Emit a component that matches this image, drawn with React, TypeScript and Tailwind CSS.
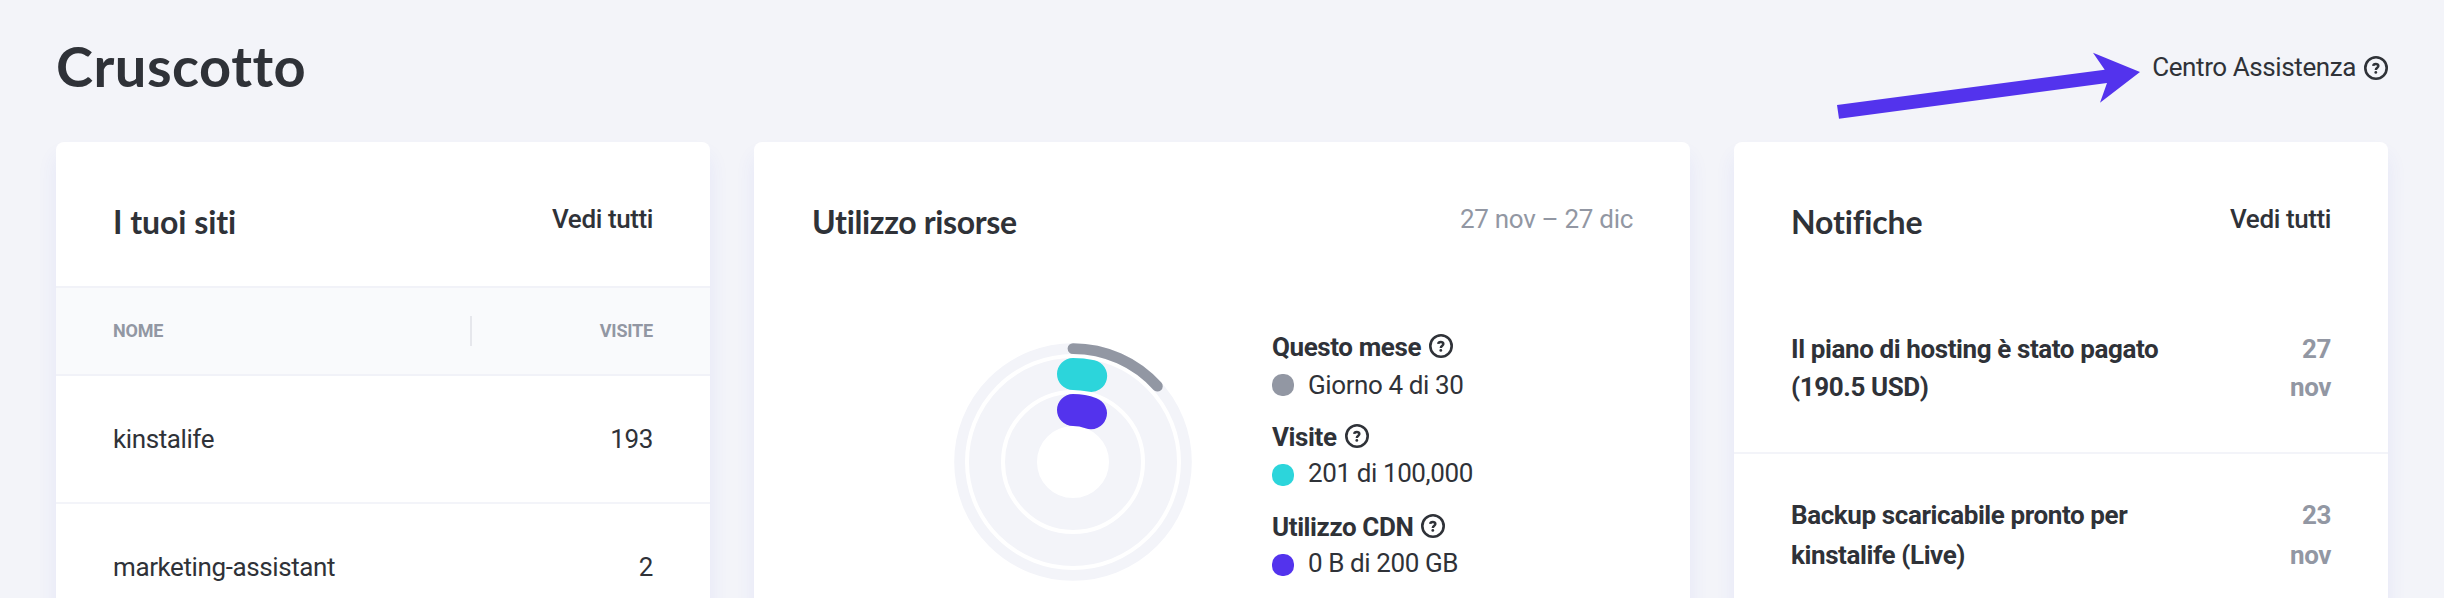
import type { ReactNode } from "react";

interface Sito {
  nome: string;
  visite: number;
}

const SITI: Sito[] = [
  { nome: "kinstalife", visite: 193 },
  { nome: "marketing-assistant", visite: 2 },
];

const RISORSE = [
  { label: "Questo mese", value: "Giorno 4 di 30", dot: "bg-[#9297a3]", leading: "leading-[38px]" },
  { label: "Visite", value: "201 di 100,000", dot: "bg-[#2cd5db]", leading: "leading-[34px]" },
  { label: "Utilizzo CDN", value: "0 B di 200 GB", dot: "bg-[#5333ed]", leading: "leading-[34px]" },
];

const NOTIFICHE = [
  { righe: ["Il piano di hosting è stato pagato", "(190.5 USD)"], giorno: "27", mese: "nov", spacing: "pt-11 leading-[38px]" },
  { righe: ["Backup scaricabile pronto per", "kinstalife (Live)"], giorno: "23", mese: "nov", spacing: "pt-[41px] leading-[40px]" },
];

// raggio, spessore, lunghezza dell'arco, colore
const ANELLI = [
  { r: 113.4, w: 10.8, arc: 95, color: "#9297a3" },
  { r: 88, w: 32, arc: 18.3, color: "#2cd5db" },
  { r: 52, w: 32, arc: 18.3, color: "#5333ed" },
];

interface CardProps {
  title: string;
  titleClass: string;
  action: ReactNode;
  className: string;
  children: ReactNode;
}

function HelpIcon({ className }: { className: string }) {
  return (
    <svg width="24" height="24" viewBox="0 0 24 24" fill="none" stroke="#2f3238" className={`flex-shrink-0 ${className}`}>
      <circle cx="12" cy="12" r="10.7" strokeWidth="2.6" />
      <path d="M9.2 9.9C9.3 8.7 10.3 8 11.8 8c1.6 0 2.6.8 2.6 2 0 1.7-2.6 1.8-2.6 4" strokeWidth="2.4" />
      <circle cx="11.8" cy="16.4" r="1.4" fill="#2f3238" stroke="none" />
    </svg>
  );
}

function Card({ title, titleClass, action, className, children }: CardProps) {
  return (
    <section className={`h-[520px] flex-shrink-0 rounded-t-lg bg-white shadow-[0_14px_20px_rgba(70,80,230,0.08)] ${className}`}>
      <div className="flex h-36 items-start justify-between px-[57px] pt-[61px]">
        <h2 className={`-mt-px font-[Lato] text-[32px] leading-10 font-bold [font-variant-ligatures:none] ${titleClass}`}>
          {title}
        </h2>
        {action}
      </div>
      {children}
    </section>
  );
}

function VediTutti() {
  return <a className="leading-8 font-medium">Vedi tutti</a>;
}

function Grafico() {
  return (
    <svg width="240" height="240" viewBox="-120 -120 240 240" fill="none" className="mt-14 ml-[199px] flex-shrink-0">
      {ANELLI.map((a) => (
        <circle key={a.r} r={a.r} stroke="#f3f4f9" strokeWidth={a.w} />
      ))}
      {ANELLI.map((a) => (
        <circle
          key={a.color}
          r={a.r}
          stroke={a.color}
          strokeWidth={a.w}
          strokeLinecap="round"
          strokeDasharray={`${a.arc} 1000`}
          transform="rotate(-90)"
        />
      ))}
    </svg>
  );
}

export default function App() {
  return (
    <div className="relative h-[598px] w-[2444px] overflow-hidden bg-[#f3f4f9] font-[Roboto,sans-serif] text-[26px] tracking-[-0.4px] text-[#2f3238]">
      <header className="flex h-[142px] items-start justify-between px-14">
        <h1 className="mt-8 font-[Lato] text-[56px] leading-[68px] font-bold tracking-[0.5px] [font-variant-ligatures:none]">
          Cruscotto
        </h1>
        <div className="mt-[51px] flex items-center gap-2">
          <span className="leading-8">Centro Assistenza</span>
          <HelpIcon className="mt-0.5" />
        </div>
      </header>

      <svg width="310" height="70" viewBox="1834 50 310 70" className="absolute top-[50px] left-[1834px]">
        <path d="M1837 105L2104.7 69.7L2093 52.7L2140 72L2100 102.7L2107 83L1839 118.7Z" fill="#5333ed" />
      </svg>

      <main className="flex gap-11 px-14">
        <Card title="I tuoi siti" titleClass="tracking-[-0.05px]" action={<VediTutti />} className="w-[654px]">
          <div className="flex h-[90px] items-center border-y-2 border-[#f1f2f8] bg-[#f9fafc] px-[57px] text-lg font-bold tracking-[-0.2px] text-[#9297a3]">
            <span className="w-[357px]">NOME</span>
            <span className="h-[30px] w-0.5 bg-[#e6e7ec]" />
            <span className="flex-1 text-right">VISITE</span>
          </div>
          {SITI.map((s) => (
            <div key={s.nome} className="flex h-32 items-center justify-between border-b-2 border-[#f3f4f9] px-[57px]">
              <span>{s.nome}</span>
              <span>{s.visite}</span>
            </div>
          ))}
        </Card>

        <Card
          title="Utilizzo risorse"
          titleClass="pl-px tracking-[-0.35px]"
          action={<span className="leading-8 tracking-[-0.3px] text-[#9297a3]">27 nov – 27 dic</span>}
          className="w-[936px]"
        >
          <div className="flex">
            <Grafico />
            <div className="mt-[42px] ml-[79px]">
              {RISORSE.map((r) => (
                <div key={r.label} className="h-[90px]">
                  <div className="flex items-center gap-2">
                    <span className="leading-[38px] font-bold">{r.label}</span>
                    <HelpIcon className="mb-0.5" />
                  </div>
                  <div className="flex h-[38px] items-center gap-3.5">
                    <span className={`h-[22px] w-[22px] rounded-[10px] ${r.dot}`} />
                    <span className={`self-start ${r.leading}`}>{r.value}</span>
                  </div>
                </div>
              ))}
            </div>
          </div>
        </Card>

        <Card title="Notifiche" titleClass="tracking-[-0.1px]" action={<VediTutti />} className="w-[654px]">
          {NOTIFICHE.map((n) => (
            <div
              key={n.giorno}
              className={`flex h-[168px] justify-between border-b-2 border-[#f3f4f9] px-[57px] font-bold ${n.spacing}`}
            >
              <div>
                {n.righe.map((riga) => (
                  <p key={riga}>{riga}</p>
                ))}
              </div>
              <div className="text-right text-[#9297a3]">
                <p>{n.giorno}</p>
                <p>{n.mese}</p>
              </div>
            </div>
          ))}
        </Card>
      </main>
    </div>
  );
}
